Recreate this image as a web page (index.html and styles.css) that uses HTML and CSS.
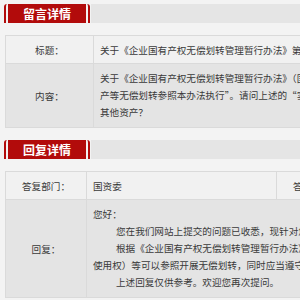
FILE: index.html
```html
<!DOCTYPE html>
<html lang="zh-CN">
<head>
    <meta charset="UTF-8">
    <meta name="viewport" content="width=device-width, initial-scale=1.0">
    <title>留言详情</title>
    <link rel="stylesheet" href="styles.css">
</head>
<body>
    <div class="page">
        <div class="section-head">
            <div class="tab">留言详情</div>
            <div class="bar"></div>
        </div>
        <table class="detail msg">
            <tr class="light">
                <td class="label">标题：</td>
                <td class="text">关于《企业国有产权无偿划转管理暂行办法》第二十七条中“实物资产”范围的问题</td>
            </tr>
            <tr class="dark">
                <td class="label">内容：</td>
                <td class="text multi">关于《企业国有产权无偿划转管理暂行办法》（国资发产权〔2005〕239号）第二十七条规定“实物资<br>产等无偿划转参照本办法执行”。请问上述的“实物资产”是否包括土地使用权、矿业权等<br>其他资产？</td>
            </tr>
        </table>

        <div class="section-head">
            <div class="tab">回复详情</div>
            <div class="bar"></div>
        </div>
        <table class="detail reply">
            <tr class="light">
                <td class="label">答复部门：</td>
                <td class="text">国资委</td>
                <td class="label">答复时间：</td>
                <td class="text">2017-06-12</td>
            </tr>
            <tr class="dark">
                <td class="label">回复：</td>
                <td class="text multi" colspan="3">
                    <p>您好：</p>
                    <p class="indent">您在我们网站上提交的问题已收悉，现针对您的问题答复如下：</p>
                    <p class="indent">根据《企业国有产权无偿划转管理暂行办法》（国资发产权〔2005〕239号）规定，实物资产（含土地<br>使用权）等可以参照开展无偿划转，同时应当遵守国家有关法律法规的规定。</p>
                    <p class="indent">上述回复仅供参考。欢迎您再次提问。</p>
                </td>
            </tr>
        </table>
    </div>
</body>
</html>
```

FILE: styles.css
```css
body {
    margin: 0;
    background: #f3f3f3;
    font-family: "Noto Sans CJK SC", "Liberation Sans", sans-serif;
    font-size: 9.6px;
    color: #3a3a3a;
    overflow: hidden;
}
.page {
    width: 680px;
    padding: 4px 0 0 4px;
}
.section-head {
    display: flex;
    height: 19px;
}
.tab {
    width: 78px;
    padding: 0 2px;
    border: solid #b20b0b;
    border-width: 0 2px;
    border-radius: 3px 3px 0 0;
    background: #b20b0b;
    background-clip: content-box;
    color: #fff;
    font-size: 12px;
    font-weight: bold;
    line-height: 19px;
    text-align: center;
}
.bar {
    flex: 1;
    margin-left: 1px;
    background: #e5e5e5;
}
.detail {
    width: 676px;
    margin: 12px 0 12px 1px;
    border-collapse: collapse;
    table-layout: fixed;
}
.detail td {
    border: 1px solid #dadada;
    padding: 0 6px;
    vertical-align: middle;
}
.detail .light {
    background: #f1f1f1;
    height: 28px;
}
.detail .dark {
    background: #e4e4e4;
}
.detail .label {
    text-align: center;
    padding: 0;
}
.msg .label {
    width: 87px;
}
.reply .label {
    width: 80px;
}
.reply .text:nth-child(2) {
    width: 177px;
}
.detail .multi {
    line-height: 17px;
    padding-top: 6px;
    padding-bottom: 6px;
}
.multi p {
    margin: 0;
}
.multi .indent {
    text-indent: 23px;
}
```
